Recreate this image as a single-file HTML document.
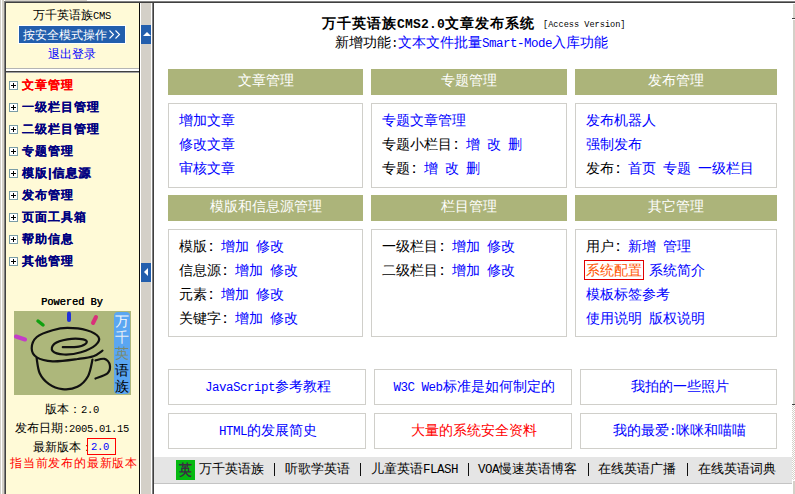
<!DOCTYPE html>
<html><head><meta charset="utf-8">
<style>
*{margin:0;padding:0;box-sizing:border-box}
html,body{width:795px;height:494px;overflow:hidden;background:#d4d0c8;font-family:"Liberation Sans",sans-serif;font-size:12px;color:#000}
.a{position:absolute}
.t{position:absolute;white-space:nowrap;line-height:1}
.m{font-family:"Liberation Mono",monospace}
.b{color:#0000ff}
.pbox{position:absolute;background:#fff;border:1px solid #d0cfca}
.phead{position:absolute;background:#acb47a;color:#fff;font-size:14px;text-align:center;white-space:nowrap}
.col{display:inline-block;width:14px;padding-left:2px;font-family:'Liberation Sans',sans-serif;text-shadow:0.3px 0 0 #000}
</style></head><body>

<div class="a" style="left:1px;top:0px;width:1px;height:494px;background:#fff;"></div>
<div class="a" style="left:4px;top:0px;width:1px;height:1px;background:#fff;"></div>
<div class="a" style="left:87px;top:0px;width:708px;height:1px;background:#fff;"></div>
<div class="a" style="left:4px;top:1px;width:791px;height:1px;background:#808080;"></div>
<div class="a" style="left:4px;top:1px;width:1px;height:493px;background:#808080;"></div>
<div class="a" style="left:5px;top:2px;width:790px;height:1px;background:#404040;"></div>
<div class="a" style="left:5px;top:2px;width:1px;height:492px;background:#404040;"></div>
<div class="a" style="left:6px;top:3px;width:133px;height:491px;background:#fffad7;"></div>
<div class="a" style="left:139px;top:3px;width:1px;height:491px;background:#0c0c0c;"></div>
<div class="a" style="left:140px;top:3px;width:1px;height:491px;background:#fff;"></div>
<div class="a" style="left:151px;top:3px;width:1px;height:491px;background:#fff;"></div>
<div class="a" style="left:152px;top:3px;width:1px;height:491px;background:#808080;"></div>
<div class="a" style="left:153px;top:3px;width:1px;height:491px;background:#404040;"></div>
<div class="a" style="left:154px;top:3px;width:641px;height:491px;background:#fff;"></div>
<div class="a" style="left:141px;top:25px;width:10px;height:19px;background:#225ead;"></div>
<svg class="a" style="left:141px;top:25px" width="10" height="19"><polygon points="2,11 10,11 6,7" fill="#fff"/></svg>
<div class="a" style="left:141px;top:263px;width:10px;height:19px;background:#225ead;"></div>
<svg class="a" style="left:141px;top:263px" width="10" height="19"><polygon points="3,9 7,5 7,13" fill="#fff"/></svg>
<div class="t" style="left:33px;top:9px;font-size:12px;">万千英语族<span class="m" style="font-size:10.5px;letter-spacing:-0.30px">CMS</span></div>
<div class="a" style="left:18px;top:25px;width:108px;height:19px;background:#fff;"></div>
<div class="a" style="left:19px;top:26px;width:106px;height:17px;background:#225ead;"></div>
<div class="t" style="left:23px;top:29px;font-size:12px;color:#fff;">按安全模式操作</div>
<svg class="a" style="left:108px;top:29px" width="14" height="11"><path d="M1.5 1.5L5.5 5.5L1.5 9.5M7.5 1.5L11.5 5.5L7.5 9.5" stroke="#fff" stroke-width="1.1" fill="none"/></svg>
<div class="t" style="left:48px;top:48px;font-size:12px;color:#0000ff;">退出登录</div>
<div class="a" style="left:6px;top:68px;width:133px;height:1px;background:#b4b4b4;"></div>
<div class="a" style="left:6px;top:69px;width:133px;height:2px;background:#fff;"></div>
<div class="a" style="left:6px;top:71px;width:133px;height:1px;background:#404040;"></div>
<div class="a" style="left:6px;top:72px;width:133px;height:1px;background:#a0a0a0;"></div>
<div class="a" style="left:9px;top:81px;width:9px;height:9px;border:1px solid #7a9ca6;background:#fff"></div>
<svg class="a" style="left:9px;top:81px" width="9" height="9"><path d="M2 4.5H7M4.5 2V7" stroke="#000" stroke-width="1"/></svg>
<div class="t" style="left:22px;top:79px;font-size:12px;color:#ff0000;font-weight:bold;letter-spacing:1px;text-shadow:0.35px 0 0 #ff0000">文章管理</div>
<div class="a" style="left:9px;top:103px;width:9px;height:9px;border:1px solid #7a9ca6;background:#fff"></div>
<svg class="a" style="left:9px;top:103px" width="9" height="9"><path d="M2 4.5H7M4.5 2V7" stroke="#000" stroke-width="1"/></svg>
<div class="t" style="left:22px;top:101px;font-size:12px;color:#000080;font-weight:bold;letter-spacing:1px;text-shadow:0.35px 0 0 #000080">一级栏目管理</div>
<div class="a" style="left:9px;top:125px;width:9px;height:9px;border:1px solid #7a9ca6;background:#fff"></div>
<svg class="a" style="left:9px;top:125px" width="9" height="9"><path d="M2 4.5H7M4.5 2V7" stroke="#000" stroke-width="1"/></svg>
<div class="t" style="left:22px;top:123px;font-size:12px;color:#000080;font-weight:bold;letter-spacing:1px;text-shadow:0.35px 0 0 #000080">二级栏目管理</div>
<div class="a" style="left:9px;top:147px;width:9px;height:9px;border:1px solid #7a9ca6;background:#fff"></div>
<svg class="a" style="left:9px;top:147px" width="9" height="9"><path d="M2 4.5H7M4.5 2V7" stroke="#000" stroke-width="1"/></svg>
<div class="t" style="left:22px;top:145px;font-size:12px;color:#000080;font-weight:bold;letter-spacing:1px;text-shadow:0.35px 0 0 #000080">专题管理</div>
<div class="a" style="left:9px;top:169px;width:9px;height:9px;border:1px solid #7a9ca6;background:#fff"></div>
<svg class="a" style="left:9px;top:169px" width="9" height="9"><path d="M2 4.5H7M4.5 2V7" stroke="#000" stroke-width="1"/></svg>
<div class="t" style="left:22px;top:167px;font-size:12px;color:#000080;font-weight:bold;letter-spacing:1px;text-shadow:0.35px 0 0 #000080">模版|信息源</div>
<div class="a" style="left:9px;top:191px;width:9px;height:9px;border:1px solid #7a9ca6;background:#fff"></div>
<svg class="a" style="left:9px;top:191px" width="9" height="9"><path d="M2 4.5H7M4.5 2V7" stroke="#000" stroke-width="1"/></svg>
<div class="t" style="left:22px;top:189px;font-size:12px;color:#000080;font-weight:bold;letter-spacing:1px;text-shadow:0.35px 0 0 #000080">发布管理</div>
<div class="a" style="left:9px;top:213px;width:9px;height:9px;border:1px solid #7a9ca6;background:#fff"></div>
<svg class="a" style="left:9px;top:213px" width="9" height="9"><path d="M2 4.5H7M4.5 2V7" stroke="#000" stroke-width="1"/></svg>
<div class="t" style="left:22px;top:211px;font-size:12px;color:#000080;font-weight:bold;letter-spacing:1px;text-shadow:0.35px 0 0 #000080">页面工具箱</div>
<div class="a" style="left:9px;top:235px;width:9px;height:9px;border:1px solid #7a9ca6;background:#fff"></div>
<svg class="a" style="left:9px;top:235px" width="9" height="9"><path d="M2 4.5H7M4.5 2V7" stroke="#000" stroke-width="1"/></svg>
<div class="t" style="left:22px;top:233px;font-size:12px;color:#000080;font-weight:bold;letter-spacing:1px;text-shadow:0.35px 0 0 #000080">帮助信息</div>
<div class="a" style="left:9px;top:257px;width:9px;height:9px;border:1px solid #7a9ca6;background:#fff"></div>
<svg class="a" style="left:9px;top:257px" width="9" height="9"><path d="M2 4.5H7M4.5 2V7" stroke="#000" stroke-width="1"/></svg>
<div class="t" style="left:22px;top:255px;font-size:12px;color:#000080;font-weight:bold;letter-spacing:1px;text-shadow:0.35px 0 0 #000080">其他管理</div>
<div class="t m" style="left:41px;top:297px;font-size:10.3px;text-shadow:0.4px 0 0 #000">Powered By</div>
<svg class="a" style="left:14px;top:311px" width="117" height="84" viewBox="14 311 117 84">
<rect x="14" y="311" width="117" height="84" fill="#adb77b"/>
<rect x="114" y="312" width="16" height="82" rx="4" fill="#5aa6f2"/>
<g fill="none" stroke="#111" stroke-width="2.2" stroke-linecap="round">
<path d="M102.5 350.6 C101.0 351.5 97.6 354.8 93.4 356.2 C89.2 357.6 84.4 358.1 77.6 359.0 C70.8 359.9 59.4 361.6 52.6 361.3 C45.8 361.0 40.3 359.6 36.8 357.4 C33.3 355.2 31.7 351.7 31.7 348.3 C31.7 344.9 33.3 340.0 36.8 337.0 C40.3 334.0 47.5 331.7 52.6 330.2 C57.7 328.7 61.7 327.9 67.4 327.9 C73.1 327.9 81.4 328.7 86.6 330.2 C91.8 331.7 97.0 334.5 98.5 337.0 C100.0 339.5 98.6 342.4 95.7 345.0 C92.8 347.6 86.3 350.7 81.0 352.3 C75.7 353.9 68.7 354.7 64.0 354.5 C59.3 354.3 54.2 352.9 52.6 351.1 C51.0 349.3 51.8 345.8 54.3 343.8 C56.8 341.8 62.6 340.1 67.4 339.3 C72.2 338.6 80.0 338.8 83.2 339.3 C86.4 339.9 87.3 341.4 86.6 342.6 C85.8 343.8 82.7 345.8 78.7 346.6 C74.7 347.4 65.5 347.1 62.8 347.2"/>
<path d="M36.6 358.1 C37.1 360.6 37.7 368.9 39.7 373.2 C41.7 377.5 44.9 381.1 48.7 383.8 C52.5 386.5 57.5 388.6 62.3 389.1 C67.1 389.6 73.1 389.0 77.4 386.8 C81.7 384.6 85.5 380.7 88.0 376.2 C90.5 371.7 91.8 362.4 92.5 359.6"/>
<path d="M95.5 360.4 C97.0 360.1 102.2 358.1 104.6 358.9 C107.0 359.6 109.3 362.5 109.8 364.9 C110.3 367.3 110.0 370.9 107.6 373.2 C105.2 375.5 97.5 377.6 95.5 378.5"/>
</g>
<g stroke-linecap="round" fill="none">
<path d="M16 336.5 L25 339.5" stroke="#c43cc8" stroke-width="4"/>
<path d="M38 321 L43 325" stroke="#10a010" stroke-width="3.5"/>
<path d="M69 313.5 L69 320" stroke="#2030d8" stroke-width="4"/>
<path d="M96 317 L93 323" stroke="#d8307a" stroke-width="4"/>
</g>
</svg>
<div class="a" style="left:115px;top:313px;width:14px;font-size:14px;line-height:16.2px;text-align:center;transform:scaleY(1.0)"><div style="color:#f8f8f8">万</div><div style="color:#e8eef4">千</div><div style="color:#7a8a70">英</div><div style="color:#000">语</div><div style="color:#000">族</div></div>
<div class="t" style="left:45px;top:403px;font-size:12px;">版本：<span class="m" style="font-size:10.5px;letter-spacing:-0.30px">2.0</span></div>
<div class="t" style="left:15px;top:422px;font-size:12px;">发布日期<span class="m" style="font-size:10.5px;letter-spacing:-0.30px">:2005.01.15</span></div>
<div class="t" style="left:33px;top:441px;font-size:12px;">最新版本：</div>
<div class="a" style="left:87px;top:438px;width:29px;height:17px;border:1px solid #ff0000"></div>
<div class="t" style="left:91px;top:440px;font-size:12px;color:#0000ff;"><span class="m" style="font-size:10.5px;letter-spacing:-0.30px">2.0</span></div>
<div class="t" style="left:10px;top:457px;font-size:12px;color:#ff0000;letter-spacing:0.8px">指当前发布的最新版本</div>
<div class="t" style="left:322px;top:16px;font-size:14px;font-weight:bold;letter-spacing:1px">万千英语族<span class="m" style="font-size:13px;letter-spacing:0.2px">CMS2.0</span>文章发布系统</div>
<div class="t m" style="left:543px;top:21px;font-size:8.6px;letter-spacing:0.0px">[Access Version]</div>
<div class="t" style="left:335px;top:35px;font-size:14px;">新增功能<span class="m" style="font-size:12.5px;letter-spacing:-0.50px">:</span><span class="b">文本文件批量<span class="m" style="font-size:12.5px;letter-spacing:-0.50px">Smart-Mode</span>入库功能</span></div>
<div class="phead" style="left:168px;top:69px;width:195px;height:26px;line-height:23px">文章管理</div>
<div class="pbox" style="left:168px;top:103px;width:195px;height:85px"></div>
<div class="phead" style="left:371px;top:69px;width:196px;height:26px;line-height:23px">专题管理</div>
<div class="pbox" style="left:371px;top:103px;width:196px;height:85px"></div>
<div class="phead" style="left:575px;top:69px;width:202px;height:26px;line-height:23px">发布管理</div>
<div class="pbox" style="left:575px;top:103px;width:202px;height:85px"></div>
<div class="phead" style="left:168px;top:195px;width:195px;height:26px;line-height:23px">模版和信息源管理</div>
<div class="pbox" style="left:168px;top:229px;width:195px;height:108px"></div>
<div class="phead" style="left:371px;top:195px;width:196px;height:26px;line-height:23px">栏目管理</div>
<div class="pbox" style="left:371px;top:229px;width:196px;height:108px"></div>
<div class="phead" style="left:575px;top:195px;width:202px;height:26px;line-height:23px">其它管理</div>
<div class="pbox" style="left:575px;top:229px;width:202px;height:108px"></div>
<div class="t" style="left:179px;top:113px;font-size:14px;"><span class="b">增加文章</span></div>
<div class="t" style="left:179px;top:137px;font-size:14px;"><span class="b">修改文章</span></div>
<div class="t" style="left:179px;top:161px;font-size:14px;"><span class="b">审核文章</span></div>
<div class="t" style="left:382px;top:113px;font-size:14px;"><span class="b">专题文章管理</span></div>
<div class="t" style="left:382px;top:137px;font-size:14px;">专题小栏目<span class="col">:</span><span class="b">增<span class="m" style="font-size:12.5px;letter-spacing:-0.50px">&nbsp;</span>改<span class="m" style="font-size:12.5px;letter-spacing:-0.50px">&nbsp;</span>删</span></div>
<div class="t" style="left:382px;top:161px;font-size:14px;">专题<span class="col">:</span><span class="b">增<span class="m" style="font-size:12.5px;letter-spacing:-0.50px">&nbsp;</span>改<span class="m" style="font-size:12.5px;letter-spacing:-0.50px">&nbsp;</span>删</span></div>
<div class="t" style="left:586px;top:113px;font-size:14px;"><span class="b">发布机器人</span></div>
<div class="t" style="left:586px;top:137px;font-size:14px;"><span class="b">强制发布</span></div>
<div class="t" style="left:586px;top:161px;font-size:14px;">发布<span class="col">:</span><span class="b">首页<span class="m" style="font-size:12.5px;letter-spacing:-0.50px">&nbsp;</span>专题<span class="m" style="font-size:12.5px;letter-spacing:-0.50px">&nbsp;</span>一级栏目</span></div>
<div class="t" style="left:179px;top:239px;font-size:14px;">模版<span class="col">:</span><span class="b">增加<span class="m" style="font-size:12.5px;letter-spacing:-0.50px">&nbsp;</span>修改</span></div>
<div class="t" style="left:179px;top:263px;font-size:14px;">信息源<span class="col">:</span><span class="b">增加<span class="m" style="font-size:12.5px;letter-spacing:-0.50px">&nbsp;</span>修改</span></div>
<div class="t" style="left:179px;top:287px;font-size:14px;">元素<span class="col">:</span><span class="b">增加<span class="m" style="font-size:12.5px;letter-spacing:-0.50px">&nbsp;</span>修改</span></div>
<div class="t" style="left:179px;top:311px;font-size:14px;">关键字<span class="col">:</span><span class="b">增加<span class="m" style="font-size:12.5px;letter-spacing:-0.50px">&nbsp;</span>修改</span></div>
<div class="t" style="left:382px;top:239px;font-size:14px;">一级栏目<span class="col">:</span><span class="b">增加<span class="m" style="font-size:12.5px;letter-spacing:-0.50px">&nbsp;</span>修改</span></div>
<div class="t" style="left:382px;top:263px;font-size:14px;">二级栏目<span class="col">:</span><span class="b">增加<span class="m" style="font-size:12.5px;letter-spacing:-0.50px">&nbsp;</span>修改</span></div>
<div class="t" style="left:586px;top:239px;font-size:14px;">用户<span class="col">:</span><span class="b">新增<span class="m" style="font-size:12.5px;letter-spacing:-0.50px">&nbsp;</span>管理</span></div>
<div class="t" style="left:586px;top:263px;font-size:14px;"><span style="color:#ff5500;outline:1px solid #e00000;outline-offset:1px">系统配置</span><span class="b"><span class="m" style="font-size:12.5px;letter-spacing:-0.50px">&nbsp;</span>系统简介</span></div>
<div class="t" style="left:586px;top:287px;font-size:14px;"><span class="b">模板标签参考</span></div>
<div class="t" style="left:586px;top:311px;font-size:14px;"><span class="b">使用说明<span class="m" style="font-size:12.5px;letter-spacing:-0.50px">&nbsp;</span>版权说明</span></div>
<div class="pbox" style="left:168px;top:369px;width:198px;height:36px"></div>
<div class="t" style="left:169px;top:379px;font-size:14px;color:#0000ff;width:198px;text-align:center;"><span class="m" style="font-size:12.5px;letter-spacing:-0.50px">JavaScript</span>参考教程</div>
<div class="pbox" style="left:374px;top:369px;width:198px;height:36px"></div>
<div class="t" style="left:375px;top:379px;font-size:14px;color:#0000ff;width:198px;text-align:center;"><span class="m" style="font-size:12.5px;letter-spacing:-0.50px">W3C&nbsp;Web</span>标准是如何制定的</div>
<div class="pbox" style="left:580px;top:369px;width:197px;height:36px"></div>
<div class="t" style="left:581px;top:379px;font-size:14px;color:#0000ff;width:197px;text-align:center;">我拍的一些照片</div>
<div class="pbox" style="left:168px;top:413px;width:198px;height:36px"></div>
<div class="t" style="left:169px;top:423px;font-size:14px;color:#0000ff;width:198px;text-align:center;"><span class="m" style="font-size:12.5px;letter-spacing:-0.50px">HTML</span>的发展简史</div>
<div class="pbox" style="left:374px;top:413px;width:198px;height:36px"></div>
<div class="t" style="left:375px;top:423px;font-size:14px;color:#ff0000;width:198px;text-align:center;">大量的系统安全资料</div>
<div class="pbox" style="left:580px;top:413px;width:197px;height:36px"></div>
<div class="t" style="left:581px;top:423px;font-size:14px;color:#0000ff;width:197px;text-align:center;">我的最爱<span class="m" style="font-size:12.5px;letter-spacing:-0.50px">:</span>咪咪和喵喵</div>
<div class="a" style="left:154px;top:457px;width:638px;height:26px;background:#e5e5e5;"></div>
<div class="a" style="left:154px;top:483px;width:638px;height:1px;background:#c4c4c4;"></div>
<div class="a" style="left:176px;top:460px;width:19px;height:20px;background:#05b910;"></div>
<div class="t" style="left:179px;top:462px;font-size:15px;color:#383040;transform:scaleX(0.85);transform-origin:0 0;font-weight:bold">英</div>
<div class="t" style="left:199px;top:462px;font-size:13px;">万千英语族</div>
<div class="a" style="left:274px;top:463px;width:1px;height:13px;background:#101010;"></div>
<div class="t" style="left:285px;top:462px;font-size:13px;">听歌学英语</div>
<div class="a" style="left:360px;top:463px;width:1px;height:13px;background:#101010;"></div>
<div class="t" style="left:371px;top:462px;font-size:13px;">儿童英语<span class="m" style="font-size:12.5px;letter-spacing:-0.50px">FLASH</span></div>
<div class="a" style="left:468px;top:463px;width:1px;height:13px;background:#101010;"></div>
<div class="t" style="left:478px;top:462px;font-size:13px;"><span class="m" style="font-size:12.5px;letter-spacing:-0.50px">VOA</span>慢速英语博客</div>
<div class="a" style="left:588px;top:463px;width:1px;height:13px;background:#101010;"></div>
<div class="t" style="left:598px;top:462px;font-size:13px;">在线英语广播</div>
<div class="a" style="left:687px;top:463px;width:1px;height:13px;background:#101010;"></div>
<div class="t" style="left:698px;top:462px;font-size:13px;">在线英语词典</div>
<div class="a" style="left:792px;top:3px;width:3px;height:16px;background:#d4d0c8;border-left:1px solid #fff;border-top:1px solid #fff"></div>
<div class="a" style="left:792px;top:18px;width:3px;height:1px;background:#404040"></div>
<div class="a" style="left:792px;top:19px;width:3px;height:386px;background:#d4d0c8;border-left:1px solid #fff;border-top:1px solid #fff"></div>
<div class="a" style="left:792px;top:404px;width:3px;height:1px;background:#404040"></div>
<div class="a" style="left:792px;top:405px;width:3px;height:75px;background-image:repeating-conic-gradient(#d4d0c8 0 25%,#fff 0 50%);background-size:2px 2px"></div>
<div class="a" style="left:792px;top:480px;width:3px;height:14px;background:#d4d0c8;border-left:1px solid #fff;border-top:1px solid #fff"></div>
</body></html>
